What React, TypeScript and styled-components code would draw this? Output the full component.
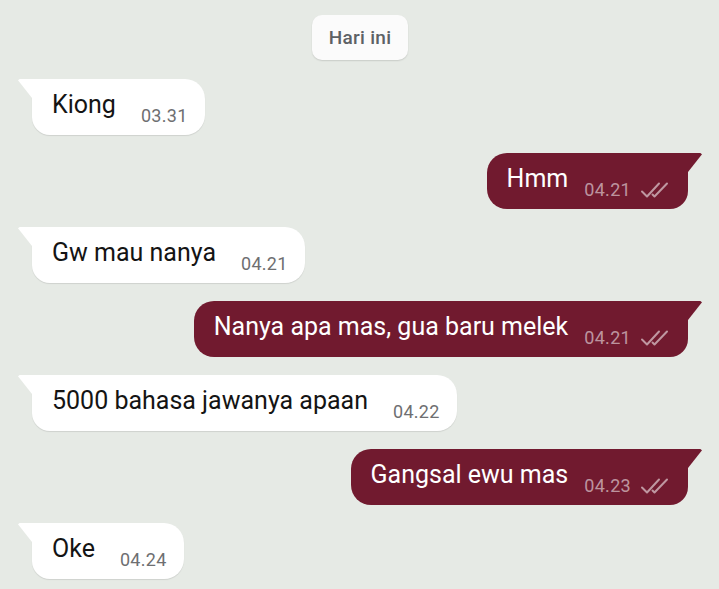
import React from "react";
import styled, { createGlobalStyle, css } from "styled-components";

const GlobalStyle = createGlobalStyle`
  html, body {
    margin: 0;
    padding: 0;
    background: #e6eae5;
  }
  body {
    font-family: Roboto, "Noto Sans", "Liberation Sans", sans-serif;
    -webkit-font-smoothing: antialiased;
  }
`;

const Screen = styled.div`
  width: 719px;
  height: 589px;
  box-sizing: border-box;
  padding: 15px 17px 0 18px;
  display: flex;
  flex-direction: column;
  gap: 18px;
  overflow: hidden;
`;

const DateRow = styled.div`
  display: flex;
  justify-content: center;
  margin-bottom: 1px;
`;

const DateChip = styled.div`
  height: 45px;
  padding: 0 17px;
  box-sizing: border-box;
  display: flex;
  align-items: center;
  background: #fbfbfb;
  border-radius: 10px;
  box-shadow: 0 1px 1.5px rgba(0, 0, 0, 0.13);
  color: #5d6165;
  font-size: 19px;
  font-weight: 500;
  letter-spacing: 0.3px;
`;

const Row = styled.div<{ $out?: boolean }>`
  display: flex;
  justify-content: ${(p) => (p.$out ? "flex-end" : "flex-start")};
`;

const Bubble = styled.div<{ $out?: boolean }>`
  position: relative;
  height: 56px;
  box-sizing: border-box;
  display: flex;
  align-items: flex-end;
  padding: 11px 17px 8px 20px;
  ${(p) =>
    p.$out
      ? css`
          background: #711a2f;
          margin-right: 14px;
          border-radius: 20px 0 18px 20px;
          padding-right: 18px;
        `
      : css`
          background: #ffffff;
          margin-left: 14px;
          border-radius: 0 20px 20px 18px;
          box-shadow: 0 1px 1px rgba(0, 0, 0, 0.1);
        `}

  &::before {
    content: "";
    position: absolute;
    top: 0;
    width: 14px;
    height: 19px;
    background: ${(p) => (p.$out ? "#711a2f" : "#ffffff")};
    ${(p) =>
      p.$out
        ? css`
            right: -14px;
            clip-path: polygon(0 0, 88% 0, 100% 6%, 0 100%);
          `
        : css`
            left: -14px;
            clip-path: polygon(0 6%, 12% 0, 100% 0, 100% 100%);
          `}
  }
`;

const Text = styled.span<{ $out?: boolean }>`
  font-size: 25px;
  line-height: 30px;
  margin-bottom: 7px;
  color: ${(p) => (p.$out ? "#ffffff" : "#141414")};
  margin-right: ${(p) => (p.$out ? "16px" : "25px")};
  white-space: nowrap;
`;

const Meta = styled.span`
  display: flex;
  align-items: center;
  gap: 9px;
  height: 22px;
`;

const Time = styled.span<{ $out?: boolean }>`
  font-size: 18px;
  line-height: 22px;
  letter-spacing: 0.3px;
  color: ${(p) => (p.$out ? "rgba(255, 255, 255, 0.55)" : "#6e6f71")};
`;

const Ticks = () => (
  <svg width="30" height="18" viewBox="0 0 30 18" fill="none">
    <path
      d="M2 10.5 L7 15.5 L19 2.5"
      stroke="rgba(255,255,255,0.55)"
      strokeWidth="2"
      strokeLinecap="round"
      strokeLinejoin="round"
    />
    <path
      d="M12.5 13.5 L14.5 15.5 L27 2.5"
      stroke="rgba(255,255,255,0.55)"
      strokeWidth="2"
      strokeLinecap="round"
      strokeLinejoin="round"
    />
  </svg>
);

type Msg = { text: string; time: string; out?: boolean };

const messages: Msg[] = [
  { text: "Kiong", time: "03.31" },
  { text: "Hmm", time: "04.21", out: true },
  { text: "Gw mau nanya", time: "04.21" },
  { text: "Nanya apa mas, gua baru melek", time: "04.21", out: true },
  { text: "5000 bahasa jawanya apaan", time: "04.22" },
  { text: "Gangsal ewu mas", time: "04.23", out: true },
  { text: "Oke", time: "04.24" },
];

export default function App() {
  return (
    <>
      <GlobalStyle />
      <Screen>
        <DateRow>
          <DateChip>Hari ini</DateChip>
        </DateRow>
        {messages.map((m, i) => (
          <Row key={i} $out={m.out}>
            <Bubble $out={m.out}>
              <Text $out={m.out}>{m.text}</Text>
              <Meta>
                <Time $out={m.out}>{m.time}</Time>
                {m.out && <Ticks />}
              </Meta>
            </Bubble>
          </Row>
        ))}
      </Screen>
    </>
  );
}
